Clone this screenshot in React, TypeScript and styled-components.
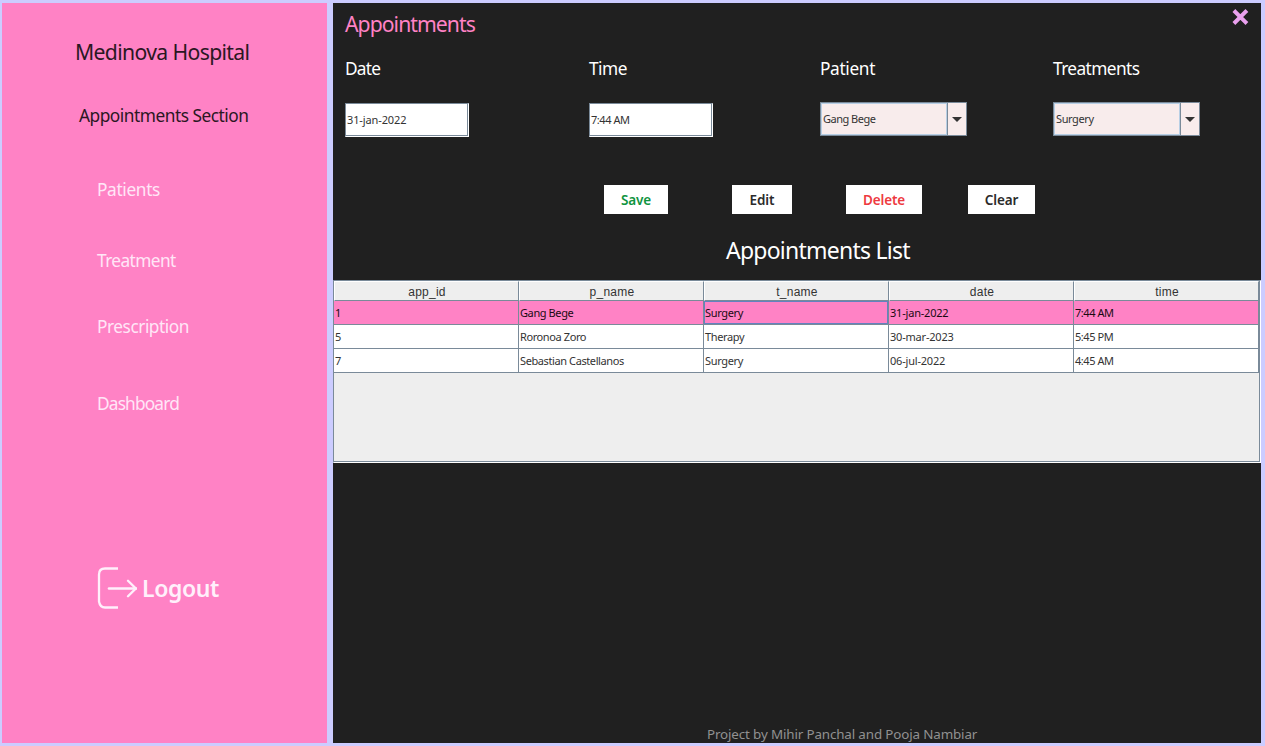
import React from 'react';
import styled, { createGlobalStyle } from 'styled-components';

const PINK = '#ff82c5';
const DARK = '#202020';
const LINE = '#7a8a99';

const GlobalStyle = createGlobalStyle`
  * { box-sizing: border-box; }
  body {
    margin: 0;
    font-family: 'Noto Sans', 'Open Sans', sans-serif;
    overflow: hidden;
  }
`;

const Window = styled.div`
  display: flex;
  gap: 6px;
  width: 1265px;
  height: 746px;
  padding: 3px 4px 3px 2px;
  background: #ccccff;
`;

const Sidebar = styled.aside`
  width: 325px;
  height: 740px;
  background: ${PINK};
  color: #2b1723;
  display: flex;
  flex-direction: column;
  white-space: nowrap;
`;

const Brand = styled.h1`
  margin: 33px 0 0 73px;
  font-size: 21.2px;
  font-weight: 400;
  line-height: 32px;
  letter-spacing: -0.65px;
`;

const Section = styled.h2`
  margin: 35px 0 0 77px;
  font-size: 17.3px;
  font-weight: 400;
  line-height: 26px;
  letter-spacing: -0.48px;
`;

const Nav = styled.nav`
  display: flex;
  flex-direction: column;
  padding: 47px 0 0 95px;
`;

const NavItem = styled.a<{ $gap: number; $track: number }>`
  margin-top: ${(p) => p.$gap}px;
  font-size: 17.3px;
  line-height: 26px;
  letter-spacing: ${(p) => p.$track}px;
  color: #ffe6f7;
`;

const Logout = styled.button`
  display: flex;
  align-items: center;
  gap: 5px;
  margin: 147px 0 0 93px;
  padding: 0;
  height: 48px;
  border: 0;
  background: none;
  color: #fff0fb;
  font: 600 23px/32px 'Noto Sans', sans-serif;
  letter-spacing: -0.4px;
`;

const Main = styled.main`
  width: 928px;
  height: 740px;
  background: ${DARK};
  color: #fff;
  display: flex;
  flex-direction: column;
  white-space: nowrap;
`;

const TitleBar = styled.header`
  display: flex;
  justify-content: space-between;
  align-items: flex-start;
  height: 43px;
  padding: 6px 12px 0 12px;
`;

const Title = styled.h2`
  margin: 0;
  font-size: 21.2px;
  font-weight: 400;
  line-height: 30px;
  letter-spacing: -0.95px;
  color: ${PINK};
`;

const CloseButton = styled.button`
  padding: 0;
  border: 0;
  background: none;
  line-height: 0;
`;

const Form = styled.section`
  display: grid;
  grid-template-columns: 244px 231px 233px 160px;
  height: 139px;
  padding: 10px 0 0 12px;
`;

const Field = styled.div`
  display: flex;
  flex-direction: column;
  align-items: flex-start;
`;

const Label = styled.label<{ $track: number }>`
  height: 46px;
  font-size: 17.3px;
  line-height: 26px;
  letter-spacing: ${(p) => p.$track}px;
`;

const TextBox = styled.div<{ $track?: number }>`
  width: 124px;
  height: 34px;
  margin-top: 1px;
  padding-left: 1px;
  background: #fff;
  border: 1px solid;
  border-color: ${LINE} #fff #fff ${LINE};
  box-shadow: inset -1px -1px 0 ${LINE};
  color: #333;
  font-size: 11px;
  line-height: 31px;
  letter-spacing: ${(p) => p.$track ?? -0.12}px;
`;

const Select = styled.div`
  display: flex;
  width: 147px;
  height: 34px;
  border: 1px solid ${LINE};
  background: #f8ecec;
  color: #333;
`;

const SelectValue = styled.span<{ $track: number }>`
  width: 126px;
  border: 1px solid #b8cfe5;
  padding-left: 1px;
  font-size: 11px;
  line-height: 29px;
  letter-spacing: ${(p) => p.$track}px;
`;

const SelectArrow = styled.span`
  flex: 1;
  display: flex;
  align-items: center;
  justify-content: center;
  border-left: 1px solid ${LINE};
`;

const Actions = styled.div`
  display: flex;
  height: 29px;
  padding-left: 271px;
`;

const ActionButton = styled.button<{ $width: number; $gap: number; $color?: string }>`
  width: ${(p) => p.$width}px;
  height: 29px;
  margin-right: ${(p) => p.$gap}px;
  padding: 2px 0 0 0;
  border: 0;
  background: #fff;
  color: ${(p) => p.$color ?? '#2b2b2b'};
  font: 600 13.5px/27px 'Noto Sans', sans-serif;
  letter-spacing: -0.12px;
`;

const ListTitle = styled.h3`
  margin: 18px 0 0 393px;
  height: 48px;
  font-size: 23px;
  font-weight: 400;
  line-height: 37px;
  letter-spacing: -0.76px;
`;

const TablePane = styled.section`
  height: 183px;
  background: #eee;
  border: 1px solid;
  border-color: ${LINE} #fff #fff ${LINE};
  box-shadow: inset -1px -1px 0 ${LINE};
`;

const Row = styled.div<{ $selected?: boolean }>`
  display: grid;
  grid-template-columns: repeat(5, 185px);
  width: 925px;
  height: 24px;
  background: ${(p) => (p.$selected ? PINK : '#fff')};
  color: ${(p) => (p.$selected ? '#1a0a12' : '#333')};
`;

const HeaderRow = styled(Row)`
  height: 20px;
  background: #eee;
`;

const HeaderCell = styled.div`
  height: 20px;
  border: 1px solid;
  border-color: #fff ${LINE} ${LINE} #fff;
  text-align: center;
  color: #333;
  font: 12px/20px 'Liberation Sans', Arial, sans-serif;
  letter-spacing: 0.25px;
  padding-left: 1px;
`;

const Cell = styled.div<{ $focused?: boolean; $track: number }>`
  border: solid ${LINE};
  border-width: 0 1px 1px 0;
  padding-left: 1px;
  font-size: 11px;
  line-height: 23px;
  letter-spacing: ${(p) => p.$track}px;
  box-shadow: ${(p) => (p.$focused ? 'inset 0 0 0 1px #6382bf' : 'none')};
`;

const Footer = styled.footer`
  margin-top: auto;
  padding-left: 374px;
  font-size: 13.4px;
  line-height: 18px;
  letter-spacing: -0.14px;
  color: #919191;
`;

const LogoutIcon = () => (
  <svg width="42" height="44" viewBox="0 0 42 44" fill="none" stroke="currentColor" strokeWidth="2.3" strokeLinecap="round">
    <path d="M23 2.5H10Q4 2.5 4 8.5V35.5Q5 41.5 10 41.5H23" strokeLinecap="butt" />
    <path d="M14 22.5H41" strokeWidth="2.6" />
    <path d="M33 14.7L40.8 22.5L33 30.3" strokeLinejoin="miter" />
  </svg>
);

const CloseIcon = () => (
  <svg width="17" height="17" viewBox="0 0 17 17" stroke="#eaa0ee" strokeWidth="4" strokeLinecap="square">
    <path d="M3.3 2.9L13.5 13.1M13.5 2.9L3.3 13.1" />
  </svg>
);

const ArrowDown = () => (
  <svg width="10" height="5" viewBox="0 0 10 5" fill="#333">
    <path d="M0 0H10L5 5Z" />
  </svg>
);

const columns = ['app_id', 'p_name', 't_name', 'date', 'time'];
const rows = [
  ['1', 'Gang Bege', 'Surgery', '31-jan-2022', '7:44 AM'],
  ['5', 'Roronoa Zoro', 'Therapy', '30-mar-2023', '5:45 PM'],
  ['7', 'Sebastian Castellanos', 'Surgery', '06-jul-2022', '4:45 AM'],
];
const columnTracks = [0, -0.4, -0.35, -0.2, -0.45];

export default function App() {
  return (
    <>
      <GlobalStyle />
      <Window>
        <Sidebar>
          <Brand>Medinova Hospital</Brand>
          <Section>Appointments Section</Section>
          <Nav>
            <NavItem $gap={1} $track={-0.35}>Patients</NavItem>
            <NavItem $gap={45} $track={-0.6}>Treatment</NavItem>
            <NavItem $gap={40} $track={-0.47}>Prescription</NavItem>
            <NavItem $gap={51} $track={-0.83}>Dashboard</NavItem>
          </Nav>
          <Logout>
            <LogoutIcon />
            Logout
          </Logout>
        </Sidebar>
        <Main>
          <TitleBar>
            <Title>Appointments</Title>
            <CloseButton aria-label="Close">
              <CloseIcon />
            </CloseButton>
          </TitleBar>
          <Form>
            <Field>
              <Label $track={-0.8}>Date</Label>
              <TextBox>31-jan-2022</TextBox>
            </Field>
            <Field>
              <Label $track={-0.5}>Time</Label>
              <TextBox $track={-0.45}>7:44 AM</TextBox>
            </Field>
            <Field>
              <Label $track={-0.35}>Patient</Label>
              <Select>
                <SelectValue $track={-0.5}>Gang Bege</SelectValue>
                <SelectArrow><ArrowDown /></SelectArrow>
              </Select>
            </Field>
            <Field>
              <Label $track={-0.6}>Treatments</Label>
              <Select>
                <SelectValue $track={-0.4}>Surgery</SelectValue>
                <SelectArrow><ArrowDown /></SelectArrow>
              </Select>
            </Field>
          </Form>
          <Actions>
            <ActionButton $width={64} $gap={64} $color="#0f9440">Save</ActionButton>
            <ActionButton $width={60} $gap={54}>Edit</ActionButton>
            <ActionButton $width={76} $gap={46} $color="#ee3a3f">Delete</ActionButton>
            <ActionButton $width={67} $gap={0}>Clear</ActionButton>
          </Actions>
          <ListTitle>Appointments List</ListTitle>
          <TablePane>
            <HeaderRow>
              {columns.map((name) => (
                <HeaderCell key={name}>{name}</HeaderCell>
              ))}
            </HeaderRow>
            {rows.map((row, r) => (
              <Row key={row[0]} $selected={r === 0}>
                {row.map((value, c) => (
                  <Cell key={columns[c]} $track={columnTracks[c]} $focused={r === 0 && c === 2}>
                    {value}
                  </Cell>
                ))}
              </Row>
            ))}
          </TablePane>
          <Footer>Project by Mihir Panchal and Pooja Nambiar</Footer>
        </Main>
      </Window>
    </>
  );
}
